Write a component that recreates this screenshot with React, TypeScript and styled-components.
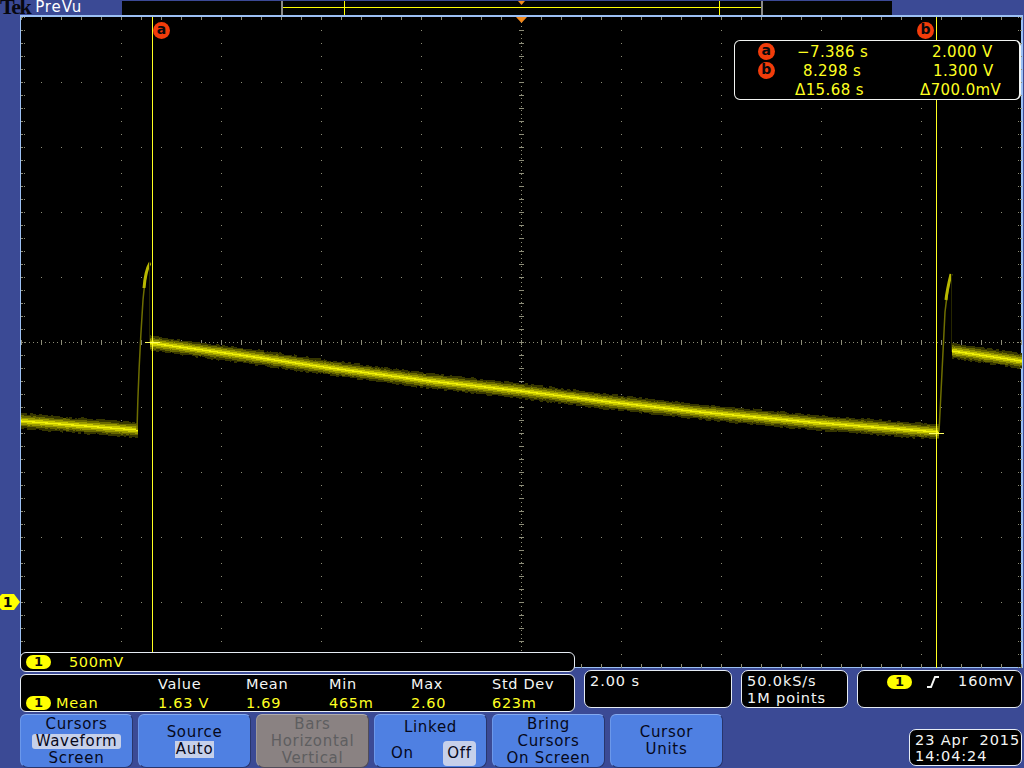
import React from "react";
import styled, { createGlobalStyle } from "styled-components";

const GlobalStyle = createGlobalStyle`
  html, body {
    margin: 0;
    padding: 0;
    background: #3b4a95;
    overflow: hidden;
  }
  body {
    font-family: "DejaVu Sans", sans-serif;
    font-size: 15px;
  }
`;

// cheap repeatable noise so the trace edges look sampled
const noise = (n: number) => {
  const v = Math.sin(n * 12.9898) * 43758.5453;
  return v - Math.floor(v);
};

const lerpPoints = (pts: number[][], x: number) => {
  for (let i = 0; i < pts.length - 1; i++) {
    if (x <= pts[i + 1][0]) {
      const t = (x - pts[i][0]) / (pts[i + 1][0] - pts[i][0]);
      return pts[i][1] + (pts[i + 1][1] - pts[i][1]) * t;
    }
  }
  return pts[pts.length - 1][1];
};

const traceParts = [
  { from: 21, to: 137, pts: [[21, 421], [137, 430]] },
  { from: 150, to: 938, pts: [[150, 343], [240, 355], [330, 368], [430, 381], [521, 391], [610, 402], [700, 412], [820, 423], [938, 432]] },
  { from: 952, to: 1021, pts: [[952, 351], [1021, 361]] },
];

const buildLayer = (half: number, jitter: number, seed: number) => {
  let d = "";
  traceParts.forEach((part) => {
    for (let x = part.from; x <= part.to; x++) {
      const y = lerpPoints(part.pts, x);
      const block = Math.floor(x / 3);
      const top = y - half - noise(block + seed) * jitter;
      const bottom = y + half + noise(block * 1.7 + seed) * jitter;
      d += `M${x + 0.5} ${top.toFixed(1)}V${bottom.toFixed(1)}`;
    }
  });
  return d;
};

const buildGrid = () => {
  let d = "";
  const dot = (x: number, y: number) => {
    d += `M${x} ${y}h1v1h-1z`;
  };
  // division dots
  for (let i = 0; i <= 10; i++) {
    for (let j = 0; j <= 50; j++) dot(21 + i * 100, 17 + j * 13);
  }
  for (let j = 0; j <= 10; j++) {
    for (let i = 0; i <= 50; i++) dot(21 + i * 20, 17 + j * 65);
  }
  // centre axes
  for (let x = 21; x <= 1021; x += 4) dot(x, 342);
  for (let y = 18; y <= 667; y += 4) dot(521, y);
  for (let i = 0; i <= 50; i++) {
    const x = 21 + i * 20;
    d += `M${x} 340h1v5h-1z`;
    d += `M${x} 17h1v3h-1z`;
    d += `M${x} 664h1v3h-1z`;
  }
  for (let j = 0; j <= 50; j++) {
    const y = 17 + j * 13;
    d += `M519 ${y}h5v1h-5z`;
    dot(22, y);
    dot(24, y);
    dot(1018, y);
    dot(1020, y);
  }
  return d;
};

const gridPath = buildGrid();
const traceLayers = [
  { d: buildLayer(6.5, 2, 3), color: "#363600" },
  { d: buildLayer(5, 1, 9), color: "#686800" },
  { d: buildLayer(3.5, 0.5, 17), color: "#989800" },
  { d: buildLayer(2, 0.2, 23), color: "#caca00" },
  { d: buildLayer(0.6, 0, 29), color: "#f2f208" },
];

const Page = styled.div`
  width: 1024px;
  height: 768px;
  position: relative;
  overflow: hidden;
  background: #3b4a95;
  display: flex;
  flex-direction: column;
`;

const TopBar = styled.div`
  height: 15px;
  display: flex;
  flex-shrink: 0;
`;

const Brand = styled.div`
  width: 122px;
  height: 15px;
  display: flex;
  align-items: flex-start;
  position: relative;
  z-index: 1;
`;

const TekLogo = styled.span`
  font-family: "Liberation Serif", serif;
  font-weight: bold;
  font-size: 22px;
  letter-spacing: -1.5px;
  color: #07070f;
  line-height: 14px;
`;

const PreVu = styled.span`
  color: #fff;
  font-size: 15px;
  letter-spacing: 0.9px;
  line-height: 15px;
  margin-left: 5px;
`;

const Overview = styled.svg`
  width: 770px;
  height: 14px;
  margin-top: 1px;
  background: #020402;
  display: block;
`;

const ScreenRow = styled.div`
  padding-left: 20px;
  padding-right: 1px;
`;

const Screen = styled.div`
  position: relative;
  width: 1003px;
  height: 653px;
  box-sizing: border-box;
  background: #000;
  border: 1px solid #9cc0f4;
  border-top-width: 2px;
  border-right-width: 2px;
`;

const Scope = styled.svg`
  position: absolute;
  left: -21px;
  top: -17px;
  width: 1024px;
  height: 768px;
  pointer-events: none;
`;

const CursorTag = styled.span<{ $left: number }>`
  position: absolute;
  left: ${(p) => p.$left}px;
  top: 5px;
  display: flex;
`;

const Badge = styled.span`
  width: 17px;
  height: 17px;
  border-radius: 50%;
  background: #f23c0a;
  color: #08080c;
  font-size: 14px;
  font-weight: bold;
  line-height: 15px;
  text-align: center;
  display: inline-block;
  flex-shrink: 0;
`;

const Readout = styled.div`
  position: absolute;
  right: 0;
  top: 23px;
  width: 287px;
  height: 60px;
  box-sizing: border-box;
  background: #000;
  border: 1px solid #f2f4f2;
  border-radius: 6px;
  border-right-width: 2px;
  padding: 1px 0 0 23px;
  display: grid;
  grid-template-columns: 39px 135px 1fr;
  grid-auto-rows: 19px;
  color: #ffff20;
  font-size: 15px;
  letter-spacing: 0.4px;
  align-items: center;
`;

const ReadoutCell = styled.span<{ $x: number }>`
  white-space: pre;
  margin-left: ${(p) => p.$x}px;
`;

const Lower = styled.div`
  margin-top: -16px;
  position: relative;
  display: flex;
  padding-left: 20px;
  height: 62px;
`;

const LeftStack = styled.div`
  width: 555px;
  display: flex;
  flex-direction: column;
  gap: 2px;
`;

const ScaleBox = styled.div`
  height: 20px;
  box-sizing: border-box;
  background: #000;
  border: 1px solid #e6ecf4;
  border-radius: 6px;
  display: flex;
  align-items: center;
  padding-left: 5px;
  color: #ffff20;
  font-size: 14.5px;
  letter-spacing: 0.6px;
`;

const ChannelPill = styled.span`
  width: 25px;
  height: 14px;
  border-radius: 7px;
  background: #ffff00;
  color: #0a0a0a;
  font-size: 13px;
  font-weight: bold;
  line-height: 14px;
  text-align: center;
  display: inline-block;
  letter-spacing: 0;
  flex-shrink: 0;
`;

const ScaleText = styled.span`
  margin-left: 18px;
`;

const MeasureBox = styled.div`
  height: 38px;
  box-sizing: border-box;
  background: #000;
  border: 1px solid #e6ecf4;
  border-radius: 6px;
  display: grid;
  grid-template-columns: 132px 88px 83px 82px 81px 1fr;
  grid-template-rows: 18px 19px;
  padding-left: 5px;
  align-items: center;
  font-size: 14.5px;
  letter-spacing: 0.7px;
`;

const MeasureHead = styled.span`
  color: #f4f6f4;
  white-space: nowrap;
`;

const MeasureValue = styled.span`
  color: #ffff20;
  white-space: nowrap;
`;

const MeasureName = styled.span`
  display: flex;
  align-items: center;
  gap: 5px;
  color: #ffff20;
`;

const InfoRow = styled.div`
  display: flex;
  gap: 9px;
  margin-left: 9px;
  padding-top: 18px;
`;

const InfoBox = styled.div<{ $w: number }>`
  width: ${(p) => p.$w}px;
  height: 38px;
  box-sizing: border-box;
  background: #000;
  border: 1px solid #e6ecf4;
  border-radius: 7px;
  color: #f4f6f4;
  font-size: 14.5px;
  letter-spacing: 0.9px;
  line-height: 17px;
  padding: 2px 0 0 5px;
  white-space: pre;
`;

const TriggerLine = styled.div`
  display: flex;
  align-items: center;
  padding-left: 24px;
  height: 17px;
`;

const SlopeIcon = styled.svg`
  width: 14px;
  height: 12px;
  margin-left: 14px;
`;

const TriggerLevel = styled.span`
  margin-left: 18px;
`;

const BottomRow = styled.div`
  display: flex;
  padding-left: 20px;
  margin-top: 2px;
  flex: 1;
  align-items: flex-start;
`;

const Buttons = styled.div`
  display: flex;
  gap: 5px;
`;

const SoftKey = styled.div<{ $off?: boolean }>`
  width: 113px;
  height: 54px;
  box-sizing: border-box;
  border-radius: 6px 6px 8px 8px;
  background: ${(p) => (p.$off ? "#8a8282" : "#4f80e2")};
  color: ${(p) => (p.$off ? "#5e5e60" : "#06081a")};
  border-top: 1px solid ${(p) => (p.$off ? "#b0acac" : "#84aaf0")};
  border-left: 1px solid ${(p) => (p.$off ? "#a09a9a" : "#6c98ea")};
  border-right: 1px solid ${(p) => (p.$off ? "#504c58" : "#28356c")};
  border-bottom: 1px solid ${(p) => (p.$off ? "#504c58" : "#28356c")};
  display: flex;
  flex-direction: column;
  align-items: center;
  justify-content: center;
  font-size: 15px;
  line-height: 17px;
  letter-spacing: 0.7px;
  text-align: center;
`;

const Picked = styled.span`
  background: #c6d0ea;
  border-radius: 3px;
  padding: 0 4px;
  line-height: 15px;
  margin: 1px 0;
`;

const PickedSquare = styled.span`
  background: #c6d0ea;
  padding: 0 1px;
  line-height: 17px;
`;

const KeyTitle = styled.span`
  margin-top: 3px;
`;

const ToggleRow = styled.div`
  display: flex;
  justify-content: space-between;
  align-items: center;
  width: 100%;
  box-sizing: border-box;
  padding: 0 10px 0 16px;
  margin-top: 5px;
`;

const OffPill = styled.span`
  background: #c6d0ea;
  border-radius: 4px;
  width: 33px;
  height: 25px;
  line-height: 25px;
  text-align: center;
`;

const Clock = styled.div`
  margin-left: auto;
  margin-right: 2px;
  margin-top: 15px;
  width: 113px;
  height: 37px;
  box-sizing: border-box;
  background: #000;
  border: 1px solid #e6ecf4;
  border-radius: 7px;
  color: #f4f6f4;
  font-size: 14.5px;
  letter-spacing: 0.9px;
  line-height: 16px;
  padding: 2px 0 0 5px;
  white-space: pre;
`;

const GroundMark = styled.svg`
  position: absolute;
  left: 0;
  top: 593px;
  width: 20px;
  height: 18px;
`;

const GroundLabel = styled.span`
  position: absolute;
  left: 0;
  top: 593px;
  width: 15px;
  height: 18px;
  line-height: 18px;
  text-align: center;
  font-size: 14px;
  font-weight: bold;
  color: #0a0a0a;
`;

const App = () => {
  return (
    <Page>
      <GlobalStyle />
      <TopBar>
        <Brand>
          <TekLogo>Tek</TekLogo>
          <PreVu>PreVu</PreVu>
        </Brand>
        <Overview viewBox="122 1 770 14">
          <path d="M281 1h2v14h-2zM761 1h2v14h-2z" fill="#8a8a8a" />
          <path d="M283 7h478v1h-478z" fill="#ffff00" />
          <path d="M344 1h1v14h-1zM719 1h1v14h-1z" fill="#ffff00" />
          <path d="M518 1h7l-3.500 4z" fill="#f28a1e" />
        </Overview>
      </TopBar>
      <ScreenRow>
        <Screen>
          <Scope viewBox="0 0 1024 768">
            <path d={gridPath} fill="#8d8d78" shapeRendering="crispEdges" />
            <path d="M516 17h11l-5.500 6z" fill="#f28a1e" />
            {traceLayers.map((layer) => (
              <path key={layer.color} d={layer.d} stroke={layer.color} strokeWidth="1" fill="none" shapeRendering="crispEdges" />
            ))}
            <path d="M137 430C138 385 141 330 143 300C145 278 147 268 150 262" stroke="#6e6e00" strokeWidth="1.5" fill="none" />
            <path d="M144 288C145 276 147 268 150 263" stroke="#b8b800" strokeWidth="3" fill="none" />
            <path d="M939 432C941 385 943 345 945 312C947 295 949 282 951 274" stroke="#6e6e00" strokeWidth="1.5" fill="none" />
            <path d="M946 300C947 290 949 282 951 274" stroke="#b8b800" strokeWidth="3" fill="none" />
            <path d="M149.500 262V343M951.500 274V352" stroke="#262600" strokeWidth="1" fill="none" />
            <path d="M152 17h1v651h-1zM936 17h1v651h-1z" fill="#ffff20" shapeRendering="crispEdges" />
            <path d="M145 342h15v1h-15zM929 433h15v1h-15z" fill="#ffff60" shapeRendering="crispEdges" />
          </Scope>
          <CursorTag $left={132}>
            <Badge>a</Badge>
          </CursorTag>
          <CursorTag $left={896}>
            <Badge>b</Badge>
          </CursorTag>
          <Readout>
            <Badge>a</Badge>
            <ReadoutCell $x={0}>−7.386 s</ReadoutCell>
            <ReadoutCell $x={0}>2.000 V</ReadoutCell>
            <Badge>b</Badge>
            <ReadoutCell $x={6}>8.298 s</ReadoutCell>
            <ReadoutCell $x={1}>1.300 V</ReadoutCell>
            <span />
            <ReadoutCell $x={-2}>Δ15.68 s</ReadoutCell>
            <ReadoutCell $x={-12}>Δ700.0mV</ReadoutCell>
          </Readout>
        </Screen>
      </ScreenRow>
      <GroundMark viewBox="0 0 20 18">
        <path d="M2 1H14L20 9L14 17H2L0 15V3Z" fill="#ffff00" />
      </GroundMark>
      <GroundLabel>1</GroundLabel>
      <Lower>
        <LeftStack>
          <ScaleBox>
            <ChannelPill>1</ChannelPill>
            <ScaleText>500mV</ScaleText>
          </ScaleBox>
          <MeasureBox>
            <span />
            <MeasureHead>Value</MeasureHead>
            <MeasureHead>Mean</MeasureHead>
            <MeasureHead>Min</MeasureHead>
            <MeasureHead>Max</MeasureHead>
            <MeasureHead>Std Dev</MeasureHead>
            <MeasureName>
              <ChannelPill>1</ChannelPill>Mean
            </MeasureName>
            <MeasureValue>1.63 V</MeasureValue>
            <MeasureValue>1.69</MeasureValue>
            <MeasureValue>465m</MeasureValue>
            <MeasureValue>2.60</MeasureValue>
            <MeasureValue>623m</MeasureValue>
          </MeasureBox>
        </LeftStack>
        <InfoRow>
          <InfoBox $w={148}>2.00 s</InfoBox>
          <InfoBox $w={107}>{"50.0kS/s\n1M points"}</InfoBox>
          <InfoBox $w={165}>
            <TriggerLine>
              <ChannelPill>1</ChannelPill>
              <SlopeIcon viewBox="0 0 14 12">
                <path d="M1 11H5L9 1H13" stroke="#f4f6f4" strokeWidth="2" fill="none" />
              </SlopeIcon>
              <TriggerLevel>160mV</TriggerLevel>
            </TriggerLine>
          </InfoBox>
        </InfoRow>
      </Lower>
      <BottomRow>
        <Buttons>
          <SoftKey>
            Cursors
            <Picked>Waveform</Picked>
            Screen
          </SoftKey>
          <SoftKey>
            Source
            <PickedSquare>Auto</PickedSquare>
          </SoftKey>
          <SoftKey $off>
            Bars
            <span>Horizontal</span>
            <span>Vertical</span>
          </SoftKey>
          <SoftKey>
            <KeyTitle>Linked</KeyTitle>
            <ToggleRow>
              On
              <OffPill>Off</OffPill>
            </ToggleRow>
          </SoftKey>
          <SoftKey>
            Bring
            <span>Cursors</span>
            <span>On Screen</span>
          </SoftKey>
          <SoftKey>
            Cursor
            <span>Units</span>
          </SoftKey>
        </Buttons>
        <Clock>{"23 Apr  2015\n14:04:24"}</Clock>
      </BottomRow>
    </Page>
  );
};

export default App;
